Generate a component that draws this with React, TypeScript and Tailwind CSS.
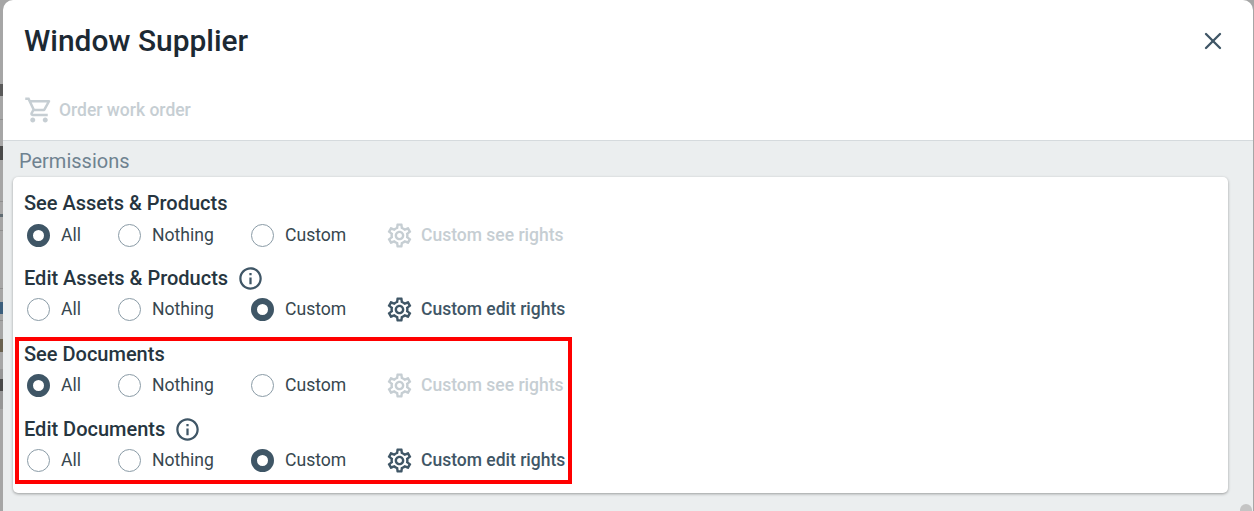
import { X } from "lucide-react";
import { MdInfoOutline, MdOutlineSettings, MdOutlineShoppingCart } from "react-icons/md";

const RadioOption = ({ label, checked, width }: { label: string; checked?: boolean; width: string }) => {
  return (
    <div className={`flex items-center ${width}`}>
      {checked ? (
        <span className="box-border h-[23px] w-[23px] rounded-full border-[6px] border-[#3f5666] bg-white" />
      ) : (
        <span className="box-border h-[23px] w-[23px] rounded-full border border-[#8a9ba6] bg-white" />
      )}
      <span className="ml-[11px] text-[17.6px] leading-6 text-[#37474f]">{label}</span>
    </div>
  );
};

const PermissionGroup = ({
  title,
  info,
  selected,
  action,
  disabled,
  className,
  rowClass = "mt-[6px]",
}: {
  title: string;
  info?: string;
  selected: string;
  action: string;
  disabled?: boolean;
  className: string;
  rowClass?: string;
}) => {
  return (
    <div className={className}>
      <div className="flex h-[26px] items-center">
        <span className="text-[20px] font-medium leading-[26px] text-[#263540]">{title}</span>
        {info && <MdInfoOutline className={`h-[27px] w-[27px] text-[#3f5666] ${info}`} />}
      </div>
      <div className={`flex h-6 items-center pl-[3px] ${rowClass}`}>
        <RadioOption label="All" checked={selected === "All"} width="w-[91px]" />
        <RadioOption label="Nothing" checked={selected === "Nothing"} width="w-[133px]" />
        <RadioOption label="Custom" checked={selected === "Custom"} width="w-[134px]" />
        <div className={`flex items-center ${disabled ? "text-[#c6ced3]" : "text-[#3f5666]"}`}>
          <MdOutlineSettings className="h-[29px] w-[29px]" />
          <span className="ml-[7px] text-[17.5px] font-medium leading-6">{action}</span>
        </div>
      </div>
    </div>
  );
};

export default function App() {
  return (
    <div className="relative h-[511px] w-[1254px] overflow-hidden bg-[#a6a6a6] font-['Roboto',sans-serif]">
      {/* page behind the modal, only a sliver shows */}
      <div className="absolute left-0 top-[119px] h-px w-[3px] bg-[#8f8f8f]" />
      <div className="absolute left-0 top-[84px] h-[12px] w-[3px] bg-[#5a5a5a]" />
      <div className="absolute left-0 top-[146px] h-[14px] w-[3px] bg-[#4a4a4a]" />
      <div className="absolute left-0 top-[201px] h-px w-[3px] bg-[#8f8f8f]" />
      <div className="absolute left-0 top-[214px] h-[3px] w-[3px] bg-[#5f6b72]" />
      <div className="absolute left-0 top-[230px] h-px w-[3px] bg-[#8f8f8f]" />
      <div className="absolute left-0 top-[288px] h-px w-[3px] bg-[#8f8f8f]" />
      <div className="absolute left-0 top-[302px] h-[12px] w-[3px] bg-[#3c5f7d]" />
      <div className="absolute left-0 top-[320px] h-px w-[3px] bg-[#8f8f8f]" />
      <div className="absolute left-0 top-[339px] h-[13px] w-[3px] bg-[#6a6250]" />
      <div className="absolute left-0 top-[369px] h-[40px] w-[3px] bg-[#969696]" />
      <div className="absolute left-0 top-[379px] h-[12px] w-[3px] bg-[#4a4a4a]" />

      <div className="relative ml-[3px] flex h-full w-[1250px] flex-col overflow-hidden rounded-t-[10px] bg-white">
        <div className="flex h-[81px] shrink-0 items-center justify-between pl-[21px] pr-[26px]">
          <h1 className="text-[29.9px] font-medium leading-9 text-[#1c2933]">Window Supplier</h1>
          <X className="h-[28px] w-[28px] text-[#3f5666]" strokeWidth={2} />
        </div>
        <div className="flex h-[60px] shrink-0 items-center border-b border-[#d5dadd] pb-[2px] pl-[21px]">
          <MdOutlineShoppingCart className="h-[30px] w-[30px] text-[#c6ced3]" />
          <span className="ml-[5px] text-[17.5px] leading-6 font-medium text-[#c6ced3]">Order work order</span>
        </div>
        <div className="relative flex-1 bg-[#ebeeef] pl-[10px]">
          <div className="pl-[6px] pt-[8px] text-[20px] leading-6 text-[#6f8290]">Permissions</div>
          <div className="mt-[4px] h-[316px] w-[1215px] rounded-[5px] bg-white pl-[11px] pt-[13px] shadow-[0_1px_3px_rgba(0,0,0,0.35)]">
            <PermissionGroup title="See Assets & Products" selected="All" action="Custom see rights" disabled className="" rowClass="mt-[7px]" />
            <PermissionGroup title="Edit Assets & Products" info="ml-[9px]" selected="Custom" action="Custom edit rights" className="mt-[18px]" />
            <PermissionGroup title="See Documents" selected="All" action="Custom see rights" disabled className="mt-[20px]" />
            <PermissionGroup title="Edit Documents" info="ml-[9px]" selected="Custom" action="Custom edit rights" className="mt-[19px]" />
          </div>
        </div>
      </div>
      {/* highlight drawn over the screenshot */}
      <div className="absolute left-[15px] top-[337px] h-[147px] w-[557px] border-[4px] border-[#ff0000]" />
      <div className="absolute left-[1240px] top-[504px] h-[12px] w-[12px] rounded-full bg-[#c4c4c4]" />
    </div>
  );
}
